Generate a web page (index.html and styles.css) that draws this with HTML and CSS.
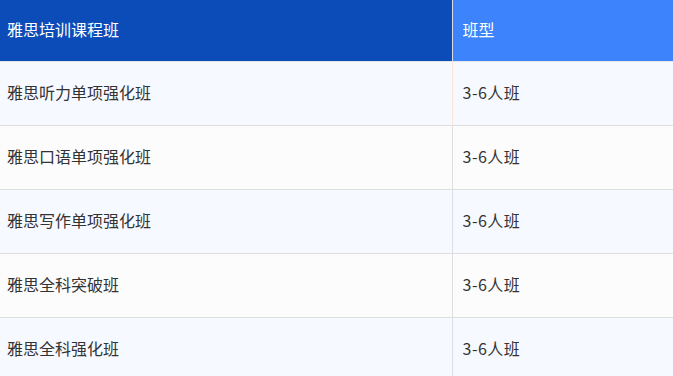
FILE: index.html
```html
<!DOCTYPE html>
<html lang="zh">
<head>
<meta charset="utf-8">
<link rel="stylesheet" href="styles.css">
</head>
<body>
<table class="course-table">
  <thead>
    <tr class="head-row">
      <th class="col-name">雅思培训课程班</th>
      <th class="col-type">班型</th>
    </tr>
  </thead>
  <tbody>
    <tr class="row odd">
      <td class="col-name">雅思听力单项强化班</td>
      <td class="col-type warm">3-6人班</td>
    </tr>
    <tr class="row even">
      <td class="col-name">雅思口语单项强化班</td>
      <td class="col-type">3-6人班</td>
    </tr>
    <tr class="row odd">
      <td class="col-name">雅思写作单项强化班</td>
      <td class="col-type">3-6人班</td>
    </tr>
    <tr class="row even">
      <td class="col-name">雅思全科突破班</td>
      <td class="col-type">3-6人班</td>
    </tr>
    <tr class="row odd">
      <td class="col-name">雅思全科强化班</td>
      <td class="col-type">3-6人班</td>
    </tr>
  </tbody>
</table>
</body>
</html>
```

FILE: styles.css
```css
html, body {
  margin: 0;
  padding: 0;
  background: #ffffff;
}
body {
  width: 673px;
  height: 376px;
  overflow: hidden;
  font-family: "Noto Sans CJK SC", "Noto Sans", sans-serif;
  font-size: 16px;
  color: #333333;
}
.course-table {
  border-collapse: collapse;
  width: 673px;
  table-layout: fixed;
}
.course-table th,
.course-table td {
  box-sizing: border-box;
  text-align: left;
  font-weight: normal;
  padding: 0 0 0 7px;
  vertical-align: middle;
  line-height: 20px;
}
.col-name {
  width: 452px;
}
.head-row th {
  height: 61px;
  padding-bottom: 3px;
  color: #ffffff;
  border-bottom: 1px solid #e3e6ea;
}
.head-row .col-name {
  background: #0c4cb9;
}
.head-row .col-type {
  background: #3d83fc;
  border-left: 1px solid #dcdcdc;
  padding-left: 10px;
}
.row td {
  height: 64px;
  padding-bottom: 3px;
  border-bottom: 1px solid #dedede;
}
.row .col-type {
  border-left: 1px solid #dedede;
  padding-left: 10px;
  letter-spacing: 0.5px;
}
.row .col-type.warm {
  border-left-color: #fbe7d9;
}
.odd td {
  background: #f6f9ff;
}
.even td {
  background: #fcfcfc;
}
```
